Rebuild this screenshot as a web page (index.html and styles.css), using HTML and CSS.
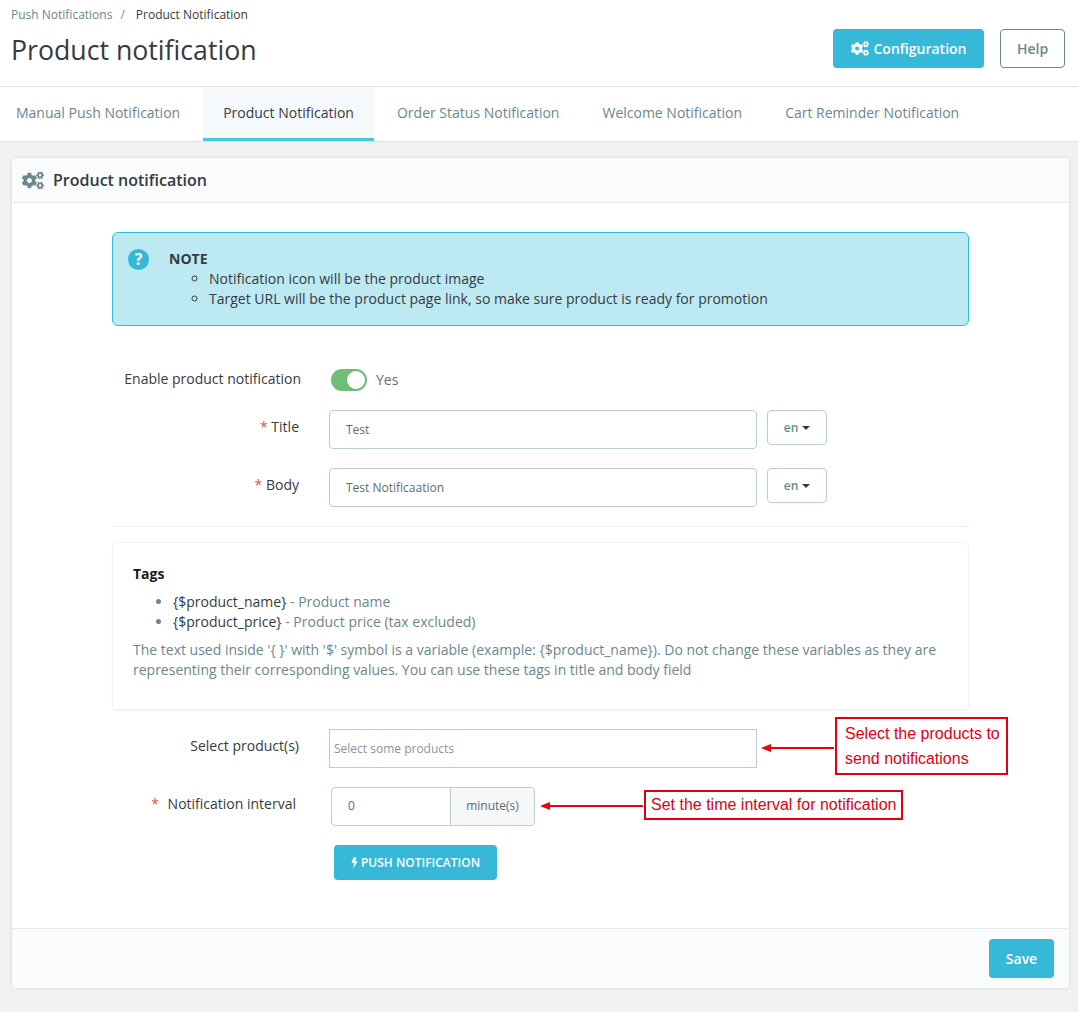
FILE: index.html
```html
<!DOCTYPE html>
<html lang="en">
<head>
<meta charset="utf-8">
<title>Product notification</title>
<link rel="stylesheet" href="styles.css">
</head>
<body>
<svg class="defs" width="0" height="0" aria-hidden="true">
  <symbol id="cogs" viewBox="0 0 640 512"><path d="M512.1 191l-8.2 14.3c-3 5.3-9.4 7.5-15.1 5.4-11.8-4.4-22.6-10.7-32.1-18.6-4.6-3.8-5.8-10.5-2.8-15.7l8.2-14.3c-6.9-8-12.3-17.3-15.9-27.4h-16.5c-6 0-11.2-4.3-12.2-10.3-2-12-2.1-24.6 0-37.1 1-6 6.2-10.4 12.2-10.4h16.5c3.6-10.1 9-19.4 15.9-27.4l-8.2-14.3c-3-5.2-1.9-11.9 2.8-15.7 9.5-7.9 20.4-14.2 32.1-18.6 5.7-2.1 12.1.1 15.1 5.4l8.2 14.3c10.5-1.9 21.2-1.9 31.7 0L552 6.3c3-5.3 9.4-7.5 15.1-5.4 11.8 4.4 22.6 10.7 32.1 18.6 4.6 3.8 5.8 10.5 2.8 15.7l-8.2 14.3c6.9 8 12.3 17.3 15.9 27.4h16.5c6 0 11.2 4.3 12.2 10.3 2 12 2.1 24.6 0 37.1-1 6-6.2 10.4-12.2 10.4h-16.5c-3.6 10.1-9 19.4-15.9 27.4l8.2 14.3c3 5.2 1.9 11.9-2.8 15.7-9.5 7.9-20.4 14.2-32.1 18.6-5.7 2.1-12.1-.1-15.1-5.4l-8.2-14.3c-10.4 1.9-21.2 1.9-31.7 0zm-10.5-58.8c38.5 29.6 82.4-14.3 52.8-52.8-38.5-29.7-82.4 14.3-52.8 52.8zM386.3 286.1l33.7 16.8c10.1 5.8 14.5 18.1 10.5 29.1-8.9 24.2-26.4 46.4-42.6 65.8-7.4 8.9-20.2 11.1-30.3 5.3l-29.1-16.8c-16 13.7-34.6 24.6-54.9 31.7v33.6c0 11.6-8.3 21.6-19.7 23.6-24.6 4.2-50.4 4.4-75.9 0-11.5-2-20-11.9-20-23.6V418c-20.3-7.2-38.9-18-54.9-31.7L74 403c-10 5.8-22.9 3.6-30.3-5.3-16.2-19.4-33.3-41.6-42.2-65.7-4-10.9.4-23.2 10.5-29.1l33.3-16.8c-3.9-20.9-3.9-42.4 0-63.4L12 205.8c-10.1-5.8-14.6-18.1-10.5-29 8.9-24.2 26-46.4 42.2-65.8 7.4-8.9 20.2-11.1 30.3-5.3l29.1 16.8c16-13.7 34.6-24.6 54.9-31.7V57.1c0-11.5 8.2-21.5 19.6-23.5 24.6-4.2 50.5-4.4 76-.1 11.5 2 20 11.9 20 23.6v33.6c20.3 7.2 38.9 18 54.9 31.7l29.1-16.8c10-5.8 22.9-3.6 30.3 5.3 16.2 19.4 33.2 41.6 42.1 65.8 4 10.9.1 23.2-10 29.1l-33.7 16.8c3.9 21 3.9 42.5 0 63.5zm-117.6 21.1c59.2-77-28.7-164.9-105.7-105.7-59.2 77 28.7 164.9 105.7 105.7zm243.4 182.7l-8.2 14.3c-3 5.3-9.4 7.5-15.1 5.4-11.8-4.4-22.6-10.7-32.1-18.6-4.6-3.8-5.8-10.5-2.8-15.7l8.2-14.3c-6.9-8-12.3-17.3-15.9-27.4h-16.5c-6 0-11.2-4.3-12.2-10.3-2-12-2.1-24.6 0-37.1 1-6 6.2-10.4 12.2-10.4h16.5c3.6-10.1 9-19.4 15.9-27.4l-8.2-14.3c-3-5.2-1.9-11.9 2.8-15.7 9.5-7.9 20.4-14.2 32.1-18.6 5.7-2.1 12.1.1 15.1 5.4l8.2 14.3c10.5-1.9 21.2-1.9 31.7 0l8.2-14.3c3-5.3 9.4-7.5 15.1-5.4 11.8 4.4 22.6 10.7 32.1 18.6 4.6 3.8 5.8 10.5 2.8 15.7l-8.2 14.3c6.9 8 12.3 17.3 15.9 27.4h16.5c6 0 11.2 4.3 12.2 10.3 2 12 2.1 24.6 0 37.1-1 6-6.2 10.4-12.2 10.4h-16.5c-3.6 10.1-9 19.4-15.9 27.4l8.2 14.3c3 5.2 1.9 11.9-2.8 15.7-9.5 7.9-20.4 14.2-32.1 18.6-5.7 2.1-12.1-.1-15.1-5.4l-8.2-14.3c-10.4 1.9-21.2 1.9-31.7 0zM501.6 431c38.5 29.6 82.4-14.3 52.8-52.8-38.5-29.6-82.4 14.3-52.8 52.8z"/></symbol>
</svg>

<header class="page-head">
  <div class="head-text">
    <div class="crumbs"><span class="crumb-link">Push Notifications</span><span class="crumb-sep">/</span><span class="crumb-now">Product Notification</span></div>
    <h1 class="page-title">Product notification</h1>
  </div>
  <div class="head-actions">
    <a class="btn btn-primary btn-config"><svg class="icon-cogs-sm"><use href="#cogs"/></svg>Configuration</a>
    <a class="btn btn-outline">Help</a>
  </div>
</header>

<nav class="tabs">
  <a class="tab tab-first">Manual Push Notification</a>
  <a class="tab tab-active">Product Notification</a>
  <a class="tab">Order Status Notification</a>
  <a class="tab">Welcome Notification</a>
  <a class="tab">Cart Reminder Notification</a>
</nav>

<main class="content">
  <section class="panel">
    <h2 class="panel-head"><svg class="icon-cogs"><use href="#cogs"/></svg>Product notification</h2>
    <div class="panel-body">
      <div class="note">
        <span class="note-icon">?</span>
        <div class="note-text">
          <strong class="note-title">NOTE</strong>
          <ul class="note-list">
            <li>Notification icon will be the product image</li>
            <li>Target URL will be the product page link, so make sure product is ready for promotion</li>
          </ul>
        </div>
      </div>

      <div class="row row-toggle">
        <label class="label label-flush">Enable product notification</label>
        <div class="toggle-wrap">
          <span class="toggle"><span class="knob"></span></span>
          <span class="toggle-text">Yes</span>
        </div>
      </div>

      <div class="row">
        <label class="label"><span class="req">*</span> Title</label>
        <div class="field-line">
          <input class="input" type="text" value="Test">
          <button class="lang" type="button">en<span class="caret"></span></button>
        </div>
      </div>

      <div class="row">
        <label class="label"><span class="req">*</span> Body</label>
        <div class="field-line">
          <input class="input" type="text" value="Test Notificaation">
          <button class="lang" type="button">en<span class="caret"></span></button>
        </div>
      </div>

      <hr class="divider">

      <div class="tags">
        <h3 class="tags-title">Tags</h3>
        <ul class="tags-list">
          <li><span class="tag-code">{$product_name}</span> - Product name</li>
          <li><span class="tag-code">{$product_price}</span> - Product price (tax excluded)</li>
        </ul>
        <p class="tags-help">The text used inside '{ }' with '$' symbol is a variable (example: {$product_name}). Do not change these variables as they are representing their corresponding values. You can use these tags in title and body field</p>
      </div>

      <div class="row">
        <label class="label label-select">Select product(s)</label>
        <div class="select-box">Select some products</div>
        <svg class="arrow arrow-select" width="74" height="10" viewBox="0 0 74 10"><path d="M0 5 10 1V4H73V6H10V9Z"/></svg>
        <div class="callout callout-select">Select the products to send notifications</div>
      </div>

      <div class="row">
        <label class="label label-interval"><span class="req req-wide">*</span> Notification interval</label>
        <div class="input-group">
          <span class="group-value">0</span>
          <span class="group-addon">minute(s)</span>
        </div>
        <svg class="arrow arrow-interval" width="104" height="10" viewBox="0 0 104 10"><path d="M0 5 10 1V4H103V6H10V9Z"/></svg>
        <div class="callout callout-interval">Set the time interval for notification</div>
      </div>

      <div class="row row-last">
        <span></span>
        <button class="btn btn-primary btn-push" type="button"><svg class="icon-bolt" viewBox="0 0 10 16"><path d="M3.2 0H8L6 5.4H9.6L3 16 4.4 7.6H.8Z"/></svg>PUSH NOTIFICATION</button>
      </div>
    </div>
    <footer class="panel-foot">
      <button class="btn btn-primary btn-save" type="button">Save</button>
    </footer>
  </section>
</main>
</body>
</html>
```

FILE: styles.css
```css
* {
  box-sizing: border-box;
}

html, body {
  margin: 0;
  padding: 0;
}

body {
  background: #eff1f2;
  color: #363a41;
  font-family: "Open Sans", "Noto Sans", sans-serif;
  font-size: 14px;
  line-height: 20px;
  height: 1012px;
  overflow: hidden;
}

.defs {
  position: absolute;
}

/* header */
.page-head {
  display: flex;
  justify-content: space-between;
  background: #fff;
  height: 87px;
  padding: 0 13px 0 11px;
  border-bottom: 1px solid #dfe3e5;
}

.crumbs {
  font-size: 12px;
  line-height: 16px;
  padding-top: 7px;
  color: #363a41;
}

.crumb-link {
  color: #6c868e;
}

.crumb-sep {
  color: #8a8a5a;
  margin: 0 11px 0 8px;
}

.page-title {
  margin: 7px 0 0;
  font-size: 26.7px;
  line-height: 40px;
  font-weight: 400;
  color: #363a41;
}

.head-actions {
  display: flex;
  gap: 16px;
  padding-top: 29px;
}

.btn {
  display: flex;
  align-items: center;
  justify-content: center;
  border-radius: 4px;
  font-family: inherit;
  font-size: 14px;
  font-weight: 600;
  border: 0;
}

.btn-primary {
  background: #36b8d8;
  color: #fff;
}

.btn-config {
  width: 151px;
  height: 39px;
}

.btn-outline {
  width: 65px;
  height: 39px;
  background: #fff;
  border: 1px solid #6c868e;
  color: #6c868e;
}

.icon-cogs-sm {
  width: 18px;
  height: 15px;
  margin-right: 5px;
  fill: #fff;
}

/* tabs */
.tabs {
  display: flex;
  background: #fff;
  height: 55px;
  border-bottom: 1px solid #dfe3e5;
}

.tab {
  display: flex;
  align-items: center;
  height: 54px;
  padding: 0 21.5px 2px;
  color: #6c868e;
}

.tab-first {
  padding-left: 16px;
}

.tab-active {
  background: #f6f9fb;
  color: #363a41;
  border-bottom: 3px solid #4ac7e0;
  margin: 0 1px;
  padding: 0 20.5px;
}

/* panel */
.content {
  padding: 16px 9px 0 12px;
}

.panel {
  background: #fff;
  border-radius: 4px;
  box-shadow: 0 0 3px rgba(0, 0, 0, 0.14);
}

.panel-head {
  display: flex;
  align-items: center;
  height: 45px;
  margin: 0;
  padding-left: 10px;
  background: #fafbfc;
  border-bottom: 1px solid #e6e9eb;
  border-radius: 4px 4px 0 0;
  font-size: 16px;
  font-weight: 600;
  color: #363a41;
}

.icon-cogs {
  width: 22px;
  height: 19px;
  margin-right: 9px;
  fill: #6c868e;
}

.panel-body {
  padding: 29px 100px 48px;
}

/* note */
.note {
  display: flex;
  height: 94px;
  padding: 16px 15px 0;
  background: #bdeaf2;
  border: 1px solid #36b8d8;
  border-radius: 6px;
  color: #363a41;
}

.note-icon {
  flex: none;
  width: 21px;
  height: 21px;
  border-radius: 50%;
  background: #36b8d8;
  color: #fff;
  font-size: 16px;
  font-weight: 700;
  line-height: 21px;
  text-align: center;
}

.note-text {
  margin-left: 20px;
}

.note-title {
  display: block;
  font-weight: 700;
  line-height: 20px;
}

.note-list {
  margin: 0;
  padding-left: 40px;
  list-style: circle;
}

/* form rows */
.row {
  position: relative;
  display: grid;
  grid-template-columns: 188px 1fr;
  column-gap: 29px;
  margin-top: 19px;
}

.row-toggle {
  margin-top: 43px;
}

.label {
  text-align: right;
  padding-top: 7px;
  padding-right: 1px;
  color: #363a41;
}

.label-flush {
  padding-top: 0;
  padding-right: 0;
  position: relative;
  left: 1px;
  line-height: 20px;
}

.label-select {
  padding-right: 1px;
}

.label-interval {
  padding-right: 4px;
}

.req {
  color: #e0533d;
}

.req-wide {
  margin-right: 5px;
}

.toggle-wrap {
  display: flex;
  align-items: center;
  gap: 9px;
  margin-left: 2px;
  height: 22px;
}

.toggle {
  display: block;
  width: 36px;
  height: 22px;
  border-radius: 11px;
  background: #70bd77;
  padding: 2px 2px 2px 16px;
}

.knob {
  display: block;
  width: 18px;
  height: 18px;
  border-radius: 50%;
  background: #fff;
}

.toggle-text {
  color: #5d7178;
}

.field-line {
  display: flex;
  align-items: flex-start;
  gap: 10px;
}

.input {
  width: 428px;
  height: 39px;
  padding: 0 16px;
  border: 1px solid #bbcdd2;
  border-radius: 4px;
  background: #fff;
  font-family: inherit;
  font-size: 12px;
  color: #5d6b70;
}

.lang {
  width: 60px;
  height: 35px;
  padding: 0;
  border: 1px solid #bbcdd2;
  border-radius: 4px;
  background: #fff;
  font-family: inherit;
  font-size: 12px;
  font-weight: 600;
  color: #6c868e;
}

.caret {
  display: inline-block;
  margin-left: 4px;
  vertical-align: 2px;
  border-top: 4px solid #363a41;
  border-left: 4px solid transparent;
  border-right: 4px solid transparent;
}

.divider {
  margin: 19px 0 15px;
  border: 0;
  border-top: 1px solid #eceff0;
}

/* tags */
.tags {
  height: 168px;
  padding: 21px 20px 0;
  border: 1px solid #f0f1f2;
  border-radius: 4px;
  box-shadow: 0 1px 1px rgba(0, 0, 0, 0.04);
  color: #6c868e;
}

.tags-title {
  margin: 0;
  font-size: 14px;
  line-height: 20px;
  font-weight: 700;
  color: #1a1a1a;
}

.tags-list {
  margin: 8px 0 8px;
  padding-left: 40px;
}

.tag-code {
  color: #363a41;
}

.tags-help {
  margin: 0;
}

/* select + interval */
.select-box {
  width: 428px;
  height: 39px;
  padding: 0 4px;
  border: 1px solid #bbcdd2;
  font-size: 12px;
  line-height: 37px;
  color: #8a9499;
}

.input-group {
  display: flex;
  width: 204px;
  height: 39px;
  margin-left: 2px;
  border: 1px solid #bbcdd2;
  border-radius: 4px;
  font-size: 12px;
}

.group-value {
  width: 118px;
  padding-left: 16px;
  line-height: 35px;
  color: #5d6b70;
}

.group-addon {
  flex: 1;
  text-align: center;
  line-height: 35px;
  background: #f5f7f8;
  border-left: 1px solid #bbcdd2;
  border-radius: 0 4px 4px 0;
  color: #5d6b70;
}

.btn-push {
  width: 163px;
  height: 35px;
  margin-left: 5px;
  font-size: 12px;
}

.icon-bolt {
  width: 7px;
  height: 12px;
  margin-right: 3px;
  fill: #fff;
}

/* annotations over the form */
.arrow {
  position: absolute;
  fill: #ec0010;
}

.arrow-select {
  left: 649px;
  top: 14px;
}

.arrow-interval {
  left: 428px;
  top: 14px;
}

.callout {
  position: absolute;
  background: #fff;
  border: 2px solid #e2000f;
  font-family: "Liberation Sans", Arial, sans-serif;
  font-size: 16px;
  line-height: 25px;
  color: #e2000f;
}

.callout-select {
  left: 723px;
  top: -12px;
  width: 173px;
  height: 58px;
  padding: 2px 4px 2px 8px;
}

.callout-interval {
  left: 532px;
  top: 3px;
  width: 259px;
  height: 30px;
  padding: 0 5px;
  white-space: nowrap;
}

/* footer */
.panel-foot {
  display: flex;
  justify-content: flex-end;
  height: 60px;
  padding: 10px 15px 0 0;
  background: #fafbfc;
  border-top: 1px solid #e6e9eb;
  border-radius: 0 0 4px 4px;
}

.btn-save {
  width: 65px;
  height: 39px;
}
```
